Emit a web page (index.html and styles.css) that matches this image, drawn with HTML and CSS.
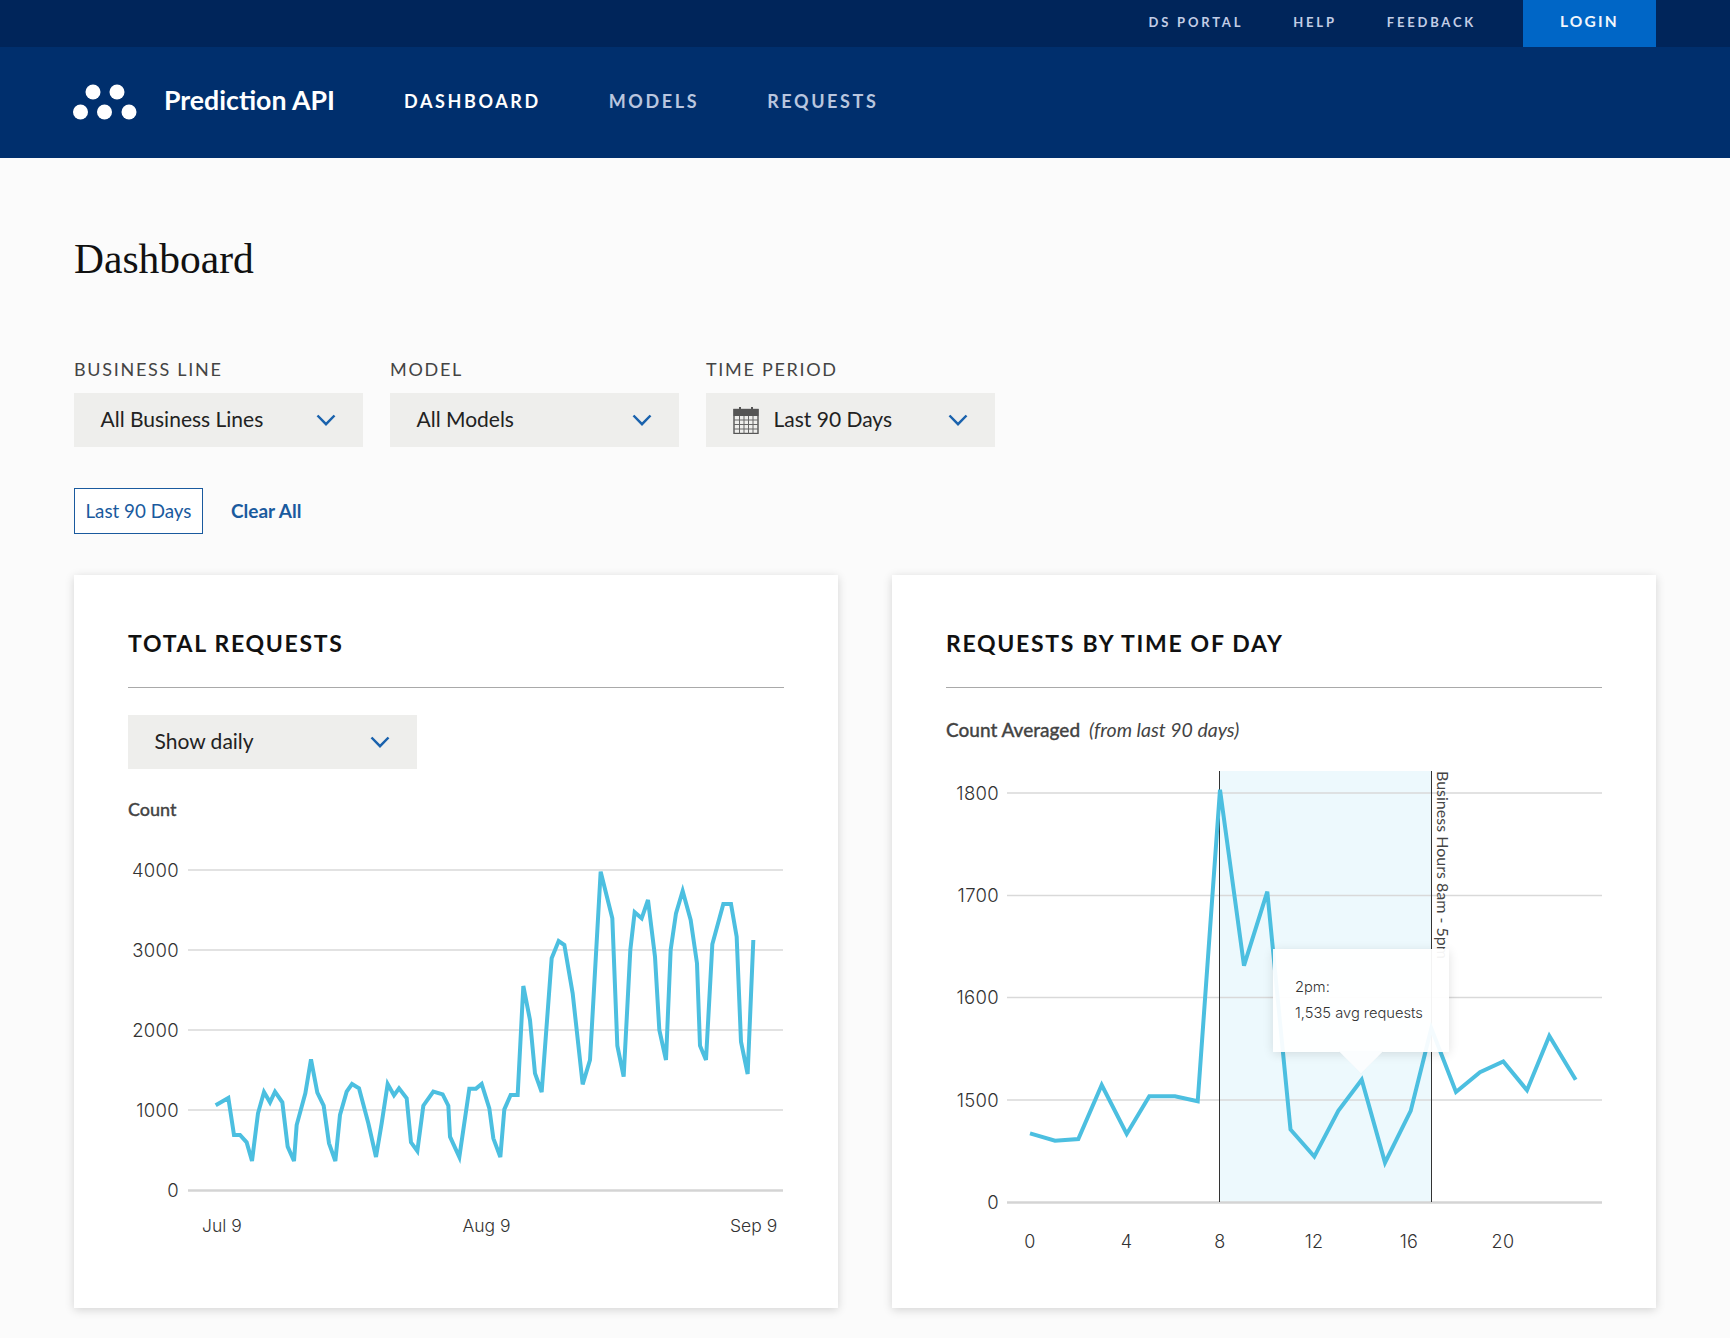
FILE: index.html
```html
<!DOCTYPE html>
<html lang="en">
<head>
<meta charset="utf-8">
<title>Prediction API</title>
<link rel="stylesheet" href="styles.css">
</head>
<body>
<header>
  <div class="topbar">
    <a class="toplink">DS PORTAL</a>
    <a class="toplink">HELP</a>
    <a class="toplink">FEEDBACK</a>
    <a class="login">LOGIN</a>
  </div>
  <nav class="navbar">
    <svg class="logo" viewBox="0 0 64 36" width="64" height="36"><circle cx="20" cy="8" r="7.5"/><circle cx="44" cy="8" r="7.5"/><circle cx="7.5" cy="28" r="7.5"/><circle cx="31.5" cy="28" r="7.5"/><circle cx="56" cy="28" r="7.5"/></svg>
    <span class="brand">Prediction API</span>
    <a class="navlink active">DASHBOARD</a>
    <a class="navlink">MODELS</a>
    <a class="navlink">REQUESTS</a>
  </nav>
</header>
<main>
  <h1>Dashboard</h1>
  <section class="filters">
    <div class="filter">
      <label>BUSINESS LINE</label>
      <div class="select"><span>All Business Lines</span><svg class="chev" viewBox="0 0 20 12" width="20" height="12"><path d="M1.5 1.5 10 10.2 18.5 1.5"/></svg></div>
    </div>
    <div class="filter">
      <label>MODEL</label>
      <div class="select"><span>All Models</span><svg class="chev" viewBox="0 0 20 12" width="20" height="12"><path d="M1.5 1.5 10 10.2 18.5 1.5"/></svg></div>
    </div>
    <div class="filter">
      <label>TIME PERIOD</label>
      <div class="select">
        <svg class="cal" viewBox="0 0 26 28" width="26" height="28">
          <rect class="cal-head" x="0.5" y="3" width="25" height="7"/>
          <rect class="cal-body" x="1" y="3.5" width="24" height="24"/>
          <path class="cal-grid" d="M1 14h24M1 18.500h24M1 23h24M6.500 10v17.500M11 10v17.500M15.500 10v17.500M20 10v17.500"/>
          <path class="cal-ring" d="M7 1v5M19 1v5"/>
        </svg>
        <span>Last 90 Days</span><svg class="chev" viewBox="0 0 20 12" width="20" height="12"><path d="M1.500 1.500 10 10.200 18.500 1.500"/></svg>
      </div>
    </div>
  </section>
  <div class="chips">
    <span class="chip">Last 90 Days</span>
    <a class="clear">Clear All</a>
  </div>
  <section class="cards">
    <article class="card">
      <h2>TOTAL REQUESTS</h2>
      <div class="select small"><span>Show daily</span><svg class="chev" viewBox="0 0 20 12" width="20" height="12"><path d="M1.500 1.500 10 10.200 18.500 1.500"/></svg></div>
      <div class="axis-title">Count</div>
      <svg class="chart chart-a" viewBox="128 840 656 430" width="656" height="430">
        <g class="grid">
          <path d="M188 870H783M188 950H783M188 1030H783M188 1110H783"/>
          <path class="base" d="M188 1190.500H783"/>
        </g>
        <g class="ticks end">
          <text x="179" y="876.500">4000</text><text x="179" y="956.500">3000</text><text x="179" y="1036.500">2000</text><text x="179" y="1116.500">1000</text><text x="179" y="1196.500">0</text>
        </g>
        <g class="ticks dates">
          <text x="202" y="1232">Jul 9</text><text x="462.500" y="1232">Aug 9</text><text x="730" y="1232">Sep 9</text>
        </g>
        <g transform="translate(120 850) scale(.33333)">
          <polyline class="line thick" points="287,766 325,744 342,855 360,855 380,877 396,933 414,790 432,726 450,757 465,725 487,757 503,890 522,933 530,825 556,730 573,628 592,728 611,767 627,880 646,933 660,795 680,725 696,702 717,715 745,820 768,921 785,820 803,702 822,736 837,715 860,745 873,877 892,903 910,767 940,725 968,733 985,767 990,860 1018,921 1048,716 1068,716 1085,702 1108,775 1120,865 1141,921 1153,778 1172,735 1193,735 1210,408 1230,510 1245,670 1265,726 1295,325 1316,273 1333,285 1358,430 1388,703 1410,630 1442,65 1477,205 1492,587 1511,680 1531,300 1544,187 1565,205 1584,150 1605,320 1618,540 1638,630 1652,300 1668,190 1688,123 1712,210 1731,340 1740,587 1758,630 1777,283 1810,162 1833,162 1850,260 1863,575 1883,672 1900,270"/>
        </g>
      </svg>
    </article>
    <article class="card">
      <h2>REQUESTS BY TIME OF DAY</h2>
      <div class="chart-note"><b>Count Averaged</b> <i>(from last 90 days)</i></div>
      <div class="chart-wrap">
        <svg class="chart chart-b" viewBox="946 760 656 510" width="656" height="510">
          <rect class="band" x="1219.500" y="772" width="212" height="431"/>
          <g class="grid">
            <path d="M1007 794H1602M1007 896.500H1602M1007 998.500H1602M1007 1101H1602"/>
            <path class="base" d="M1007 1203.500H1602"/>
          </g>
          <path class="rule" d="M1219.500 772V1203M1431.500 772V1203"/>
          <text class="rot" transform="translate(1437 772) rotate(90)">Business Hours 8am - 5pm</text>
          <g class="ticks end">
            <text x="999" y="800.500">1800</text><text x="999" y="902.500">1700</text><text x="999" y="1004.500">1600</text><text x="999" y="1107.500">1500</text><text x="999" y="1209.500">0</text>
          </g>
          <g class="ticks mid">
            <text x="1030" y="1249">0</text><text x="1126.500" y="1249">4</text><text x="1220" y="1249">8</text><text x="1314" y="1249">12</text><text x="1409" y="1249">16</text><text x="1503" y="1249">20</text>
          </g>
          <polyline class="line" points="1030,1134.300 1055,1141.700 1078.300,1140 1101.700,1086 1126.700,1135 1149.300,1097.300 1175,1097.300 1197.700,1102.300 1220,790.700 1244,966.700 1267.300,892.700 1290.500,1130.500 1314.300,1157.600 1338.300,1111.900 1361.700,1080.700 1385,1163.600 1410.700,1111.900 1431.300,1029.400 1456,1093 1480,1073.200 1503.300,1062.400 1527,1091.200 1549.300,1036.900 1575.700,1080.700"/>
        </svg>
        <div class="tooltip">
          <div>2pm:</div>
          <div>1,535 avg requests</div>
        </div>
      </div>
    </article>
  </section>
</main>
</body>
</html>
```
FILE: styles.css
```css
* { box-sizing: border-box; }
html, body { margin: 0; padding: 0; }
body {
  width: 1730px;
  height: 1338px;
  overflow: hidden;
  background: #fbfbfb;
  font-family: "Lato", "Liberation Sans", sans-serif;
  color: #222;
}

.topbar {
  height: 47px;
  background: #00255a;
  display: flex;
  justify-content: flex-end;
  align-items: center;
  padding-right: 74px;
}
.toplink {
  font-size: 13px;
  font-weight: 700;
  letter-spacing: 2.8px;
  color: #c3cde6;
  margin-right: 50px;
  padding-bottom: 4px;
}
.toplink:nth-child(3) { margin-right: 47px; }
.login {
  width: 133px;
  height: 47px;
  background: #0066c6;
  color: #f2f6fc;
  font-size: 15.500px;
  font-weight: 700;
  letter-spacing: 2.2px;
  display: flex;
  align-items: center;
  justify-content: center;
  padding-bottom: 6px;
}

.navbar {
  height: 111px;
  background: #002f6d;
  display: flex;
  align-items: center;
  padding-left: 73px;
}
.logo { fill: #fff; margin: 0 27px 2px 0; }
.brand {
  font-size: 26.700px;
  font-weight: 700;
  color: #fff;
  margin-right: 69px;
  padding-bottom: 5px;
}
.navlink {
  font-size: 18px;
  font-weight: 700;
  letter-spacing: 2.6px;
  color: #b9c6df;
  margin-right: 68px;
  padding-bottom: 3px;
}
.navlink.active { color: #fff; }

main { padding: 0 74px; }
h1 {
  margin: 78px 0 76px;
  font-family: "Liberation Serif", serif;
  font-weight: 400;
  font-size: 41.500px;
  line-height: 46px;
  color: #111;
}

.filters { display: flex; gap: 27px; }
.filter { width: 289px; }
.filter label {
  display: block;
  font-size: 18px;
  line-height: 22px;
  font-weight: 400;
  letter-spacing: 1.700px;
  color: #444;
  margin-bottom: 13px;
}
.select {
  height: 54px;
  background: #eeeeec;
  display: flex;
  align-items: center;
  padding: 0 27px 0 26.500px;
  font-size: 21px;
  color: #222;
}
.select span { padding-bottom: 4px; }
.select .chev { margin-left: auto; }
.select.small { width: 289px; margin: 27px 0 28px; }
.chev { fill: none; stroke: #1a62ad; stroke-width: 2.5; }
.cal { margin: 0 15px 0 0; flex: none; }
.cal-head { fill: #555; }
.cal-body { fill: none; stroke: #555; stroke-width: 1.4; }
.cal-grid { fill: none; stroke: #666; stroke-width: 1; }
.cal-ring { fill: none; stroke: #555; stroke-width: 2; }

.chips {
  display: flex;
  align-items: center;
  margin: 41px 0;
}
.chip {
  width: 129px;
  height: 46px;
  border: 1px solid #1a5a9e;
  background: #fff;
  color: #1a5a9e;
  font-size: 18.800px;
  display: flex;
  align-items: center;
  justify-content: center;
  padding-bottom: 2px;
}
.clear {
  margin-left: 28px;
  padding-bottom: 2px;
  color: #1a5a9e;
  font-size: 19px;
  font-weight: 700;
}

.cards {
  display: grid;
  grid-template-columns: 1fr 1fr;
  gap: 54px;
}
.card {
  height: 733px;
  background: #fff;
  padding: 53px 54px 0;
  box-shadow: 0 2px 9px rgba(0, 0, 0, .16);
}
h2 {
  margin: 0;
  font-size: 23px;
  font-weight: 700;
  line-height: 30px;
  letter-spacing: 1.700px;
  color: #111;
  padding-bottom: 29px;
  border-bottom: 1px solid #a9a9a9;
  height: 60px;
}
.axis-title {
  font-size: 18px;
  line-height: 24px;
  font-weight: 500;
  -webkit-text-stroke: .3px #444;
  color: #444;
  margin-bottom: 19px;
}
.chart-note {
  margin: 30px 0 17px;
  font-size: 19px;
  line-height: 24px;
  color: #444;
}
.chart-note b { font-weight: 500; margin-right: 4px; -webkit-text-stroke: .3px #444; }
.chart-note i { font-weight: 400; font-size: 19.500px; }

.chart { display: block; overflow: visible; }
.chart-wrap { position: relative; }
.grid path { fill: none; stroke: #d9d9d9; stroke-width: 1.3; }
.grid .base { stroke: #d4d4d4; stroke-width: 2.5; }
.ticks text {
  font-family: "Inter", "Liberation Sans", sans-serif;
  font-weight: 300;
  font-size: 18.500px;
  letter-spacing: .3px;
  fill: #333;
}
.ticks.dates text { font-size: 17.500px; letter-spacing: 0; }
.ticks.end text { text-anchor: end; }
.ticks.mid text { text-anchor: middle; font-size: 18px; }
.line {
  fill: none;
  stroke: #4cbfe0;
  stroke-width: 4;
  stroke-linejoin: miter;
}
.line.thick { stroke-width: 12; }
.band { fill: #edf9fd; }
.rule { fill: none; stroke: #333; stroke-width: 1; }
.rot {
  font-family: "Lato", "Liberation Sans", sans-serif;
  font-size: 16px;
  fill: #444;
}

.tooltip {
  position: absolute;
  left: 327px;
  top: 190px;
  width: 176px;
  height: 103px;
  padding: 25px 0 0 22px;
  background: rgba(255, 255, 255, .94);
  box-shadow: 0 2px 10px rgba(0, 0, 0, .12);
  font-family: "Inter", "Liberation Sans", sans-serif;
  font-weight: 300;
  font-size: 14.700px;
  line-height: 26px;
  color: #333;
}
.tooltip::after {
  content: "";
  position: absolute;
  left: 72px;
  bottom: -15px;
  width: 32px;
  height: 32px;
  background: #fbfdfe;
  transform: rotate(45deg);
  box-shadow: 3px 3px 6px rgba(0, 0, 0, .08);
  clip-path: polygon(100% 0, 100% 100%, 0 100%);
}
```
